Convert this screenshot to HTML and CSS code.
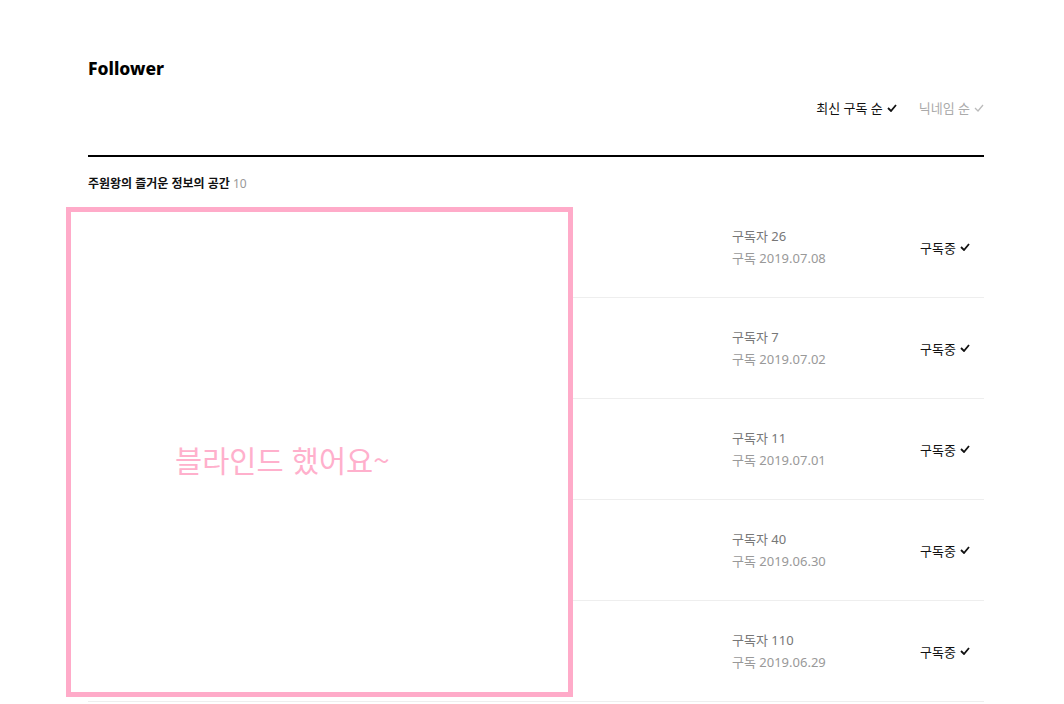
FILE: index.html
```html
<!DOCTYPE html>
<html lang="ko">
<head>
  <meta charset="UTF-8">
  <title>Follower</title>
  <link rel="stylesheet" href="styles.css">
</head>
<body>
  <div class="page">
    <h1 class="title">Follower</h1>

    <div class="sort">
      <span class="sort-item active">최신 구독 순<svg class="check" viewBox="0 0 10 8"><polyline points="1,4 4,7 9,1"/></svg></span>
      <span class="sort-item">닉네임 순<svg class="check light" viewBox="0 0 10 8"><polyline points="1,4 4,7 9,1"/></svg></span>
    </div>

    <div class="group">
      <div class="group-title">주원왕의 즐거운 정보의 공간 <span class="count">10</span></div>

      <ul class="list">
        <li class="row">
          <div class="who"></div>
          <div class="stats"><p class="subs">구독자 26</p><p class="date">구독 2019.07.08</p></div>
          <div class="status">구독중<svg class="check" viewBox="0 0 10 8"><polyline points="1,4 4,7 9,1"/></svg></div>
        </li>
        <li class="row">
          <div class="who"></div>
          <div class="stats"><p class="subs">구독자 7</p><p class="date">구독 2019.07.02</p></div>
          <div class="status">구독중<svg class="check" viewBox="0 0 10 8"><polyline points="1,4 4,7 9,1"/></svg></div>
        </li>
        <li class="row">
          <div class="who"></div>
          <div class="stats"><p class="subs">구독자 11</p><p class="date">구독 2019.07.01</p></div>
          <div class="status">구독중<svg class="check" viewBox="0 0 10 8"><polyline points="1,4 4,7 9,1"/></svg></div>
        </li>
        <li class="row">
          <div class="who"></div>
          <div class="stats"><p class="subs">구독자 40</p><p class="date">구독 2019.06.30</p></div>
          <div class="status">구독중<svg class="check" viewBox="0 0 10 8"><polyline points="1,4 4,7 9,1"/></svg></div>
        </li>
        <li class="row">
          <div class="who"></div>
          <div class="stats"><p class="subs">구독자 110</p><p class="date">구독 2019.06.29</p></div>
          <div class="status">구독중<svg class="check" viewBox="0 0 10 8"><polyline points="1,4 4,7 9,1"/></svg></div>
        </li>
      </ul>
    </div>
  </div>

  <div class="blind">블라인드 했어요~</div>
</body>
</html>
```

FILE: styles.css
```css
body {
  margin: 0;
  font-family: "Noto Sans", "Noto Sans CJK KR", sans-serif;
  color: #111;
  background: #fff;
}

.page {
  width: 896px;
  margin: 0 0 0 88px;
  padding-top: 56px;
}

.title {
  margin: 0;
  font-size: 17.5px;
  font-weight: 800;
  line-height: 24px;
  color: #000;
}

.sort {
  display: flex;
  justify-content: flex-end;
  gap: 22px;
  margin-top: 17px;
  padding-bottom: 36px;
  border-bottom: 2px solid #000;
  font-size: 13px;
  line-height: 22px;
}

.sort-item {
  display: flex;
  align-items: center;
  color: #aaa;
}

.sort-item.active {
  color: #111;
}

.check {
  width: 10px;
  height: 8px;
  margin-left: 4px;
  fill: none;
  stroke: #111;
  stroke-width: 1.8;
}

.check.light {
  stroke: #bbb;
  stroke-width: 1.3;
}

.group-title {
  margin-top: 17px;
  font-size: 12px;
  font-weight: bold;
  line-height: 20px;
}

.count {
  font-weight: normal;
  color: #999;
}

.list {
  list-style: none;
  margin: 3px 0 0;
  padding: 0;
}

.row {
  display: flex;
  align-items: center;
  height: 100px;
  border-bottom: 1px solid #eee;
}

.who {
  flex: 0 0 644px;
}

.stats {
  flex: 0 0 188px;
  font-size: 13px;
  line-height: 22px;
}

.stats p {
  margin: 0;
}

.subs {
  color: #777;
}

.date {
  color: #999;
}

.status {
  display: flex;
  align-items: center;
  font-size: 13px;
  color: #111;
}

.blind {
  position: absolute;
  left: 66px;
  top: 207px;
  width: 393px;
  height: 466px;
  padding: 14px 0 0 104px;
  border: 5px solid #ffabc9;
  background: #fff;
  display: flex;
  align-items: center;
  color: #ffb0cc;
  font-size: 29.5px;
  font-family: "Noto Sans CJK KR", sans-serif;
}
```
